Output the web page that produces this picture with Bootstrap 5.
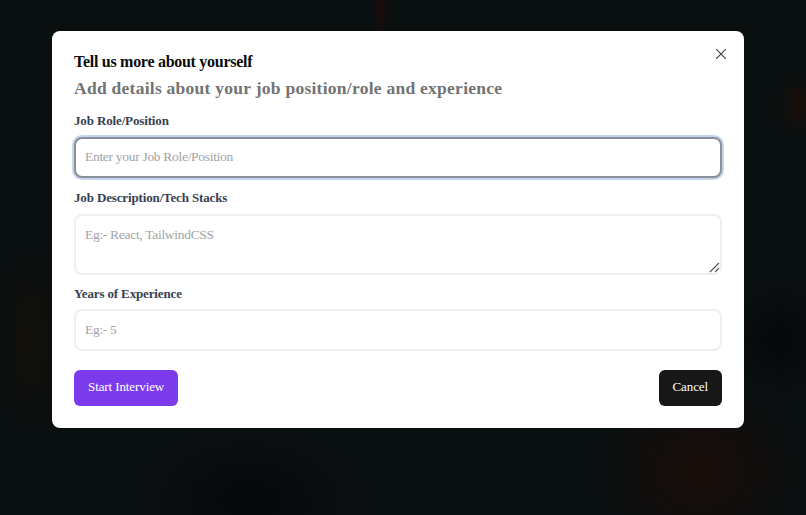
<!DOCTYPE html>
<html lang="en">
<head>
<meta charset="utf-8">
<title>Tell us more about yourself</title>
<link href="https://cdn.jsdelivr.net/npm/bootstrap@5.3.0/dist/css/bootstrap.min.css" rel="stylesheet">
<style>
html,body{height:100%;}
body{
  font-family:"Liberation Serif","Times New Roman",serif;
  background-color:#0a0f10;
  background-image:
    radial-gradient(ellipse 8px 30px at 381px 10px,#1f0c0a 0,rgba(31,12,10,0) 100%),
    radial-gradient(ellipse 22px 30px at 800px 105px,#1a0e08 0,rgba(26,14,8,0) 100%),
    radial-gradient(ellipse 32px 90px at 30px 340px,#130f08 0,rgba(19,15,8,0) 100%),
    radial-gradient(ellipse 100px 90px at 700px 470px,#190c08 0,rgba(25,12,8,0) 100%),
    radial-gradient(ellipse 110px 70px at 250px 500px,#050808 0,rgba(5,8,8,0) 100%),
    radial-gradient(ellipse 60px 60px at 780px 340px,#050808 0,rgba(5,8,8,0) 100%);
  overflow:hidden;
}
.stage{height:515px;padding-top:31px;padding-right:10px;}
.dialog-box{
  position:relative;
  width:692px;height:397px;
  background:#fff;border-radius:8px;
  padding:21px 22px 22px;
}
.dialog-title{font-size:16px;line-height:20px;font-weight:700;letter-spacing:-.28px;color:#0a0a0a;margin:0 0 4px;}
.dialog-sub{font-size:17.5px;line-height:24px;font-weight:700;letter-spacing:.26px;color:#737373;margin:0 0 14px;}
.field-label{font-size:13px;line-height:14px;font-weight:700;letter-spacing:-.14px;color:#374151;margin:0 0 9px;display:block;}
.label-tight{margin-bottom:8px;}
.field{
  display:block;width:100%;
  font-family:inherit;font-size:13.5px;letter-spacing:-.3px;color:#111;
  padding:0 9px;
  background:#fff;
  border:2px solid #efefef;border-radius:8px;
  outline:0;
}
.field::placeholder{color:#9fa3a9;opacity:1;}
.field-input{height:42px;}
.field-area{height:61px;padding-top:9px;line-height:20px;display:block;}
.field-active{
  height:41px;
  padding-bottom:2px;
  border-color:#8a8f9c;
  box-shadow:0 0 0 2px #c5d6ea;
}
.gap-a{margin-bottom:13px;}
.gap-b{margin-bottom:12px;}
.act{
  height:36px;border:0;border-radius:6px;
  font-family:inherit;font-size:13px;letter-spacing:-.1px;line-height:32px;color:#fff;
  padding:0 14px 2px;
}
.act-go,.act-go:hover{background:#7c3aed;color:#fff;}
.act-stop,.act-stop:hover{background:#171717;color:#fff;}
.actions{margin-top:19px;}
.dismiss{
  position:absolute;top:17px;right:17px;width:12px;height:12px;
  padding:0;border:0;background:none;display:block;line-height:0;
}
.grip{position:absolute;right:2px;bottom:2px;pointer-events:none;display:block;background:#fff;}
</style>
</head>
<body>
<main class="stage d-flex justify-content-center align-items-start">
  <section class="dialog-box">
    <button class="dismiss" type="button" aria-label="Close">
      <svg width="12" height="12" viewBox="0 0 12 12" fill="none" stroke="#3a3a3a" stroke-width="1.1"><path d="M1.2 1.2 10.8 10.8M10.8 1.2 1.2 10.8"/></svg>
    </button>
    <h2 class="dialog-title">Tell us more about yourself</h2>
    <p class="dialog-sub">Add details about your job position/role and experience</p>
    <form>
      <div class="gap-a">
        <label class="field-label" for="role">Job Role/Position</label>
        <input class="field field-active" id="role" type="text" placeholder="Enter your Job Role/Position">
      </div>
      <div class="gap-b">
        <label class="field-label" for="desc">Job Description/Tech Stacks</label>
        <div class="position-relative">
          <textarea class="field field-area" id="desc" placeholder="Eg:- React, TailwindCSS"></textarea>
          <svg class="grip" width="11" height="11" viewBox="0 0 11 11" fill="none" stroke="#55585e" stroke-width="1.2"><path d="M1 10 10 1M6 10 10 6"/></svg>
        </div>
      </div>
      <div>
        <label class="field-label label-tight" for="years">Years of Experience</label>
        <input class="field field-input" id="years" type="text" placeholder="Eg:- 5">
      </div>
      <div class="actions d-flex justify-content-between">
        <button class="btn act act-go" type="button">Start Interview</button>
        <button class="btn act act-stop" type="button">Cancel</button>
      </div>
    </form>
  </section>
</main>
<script src="https://cdn.jsdelivr.net/npm/bootstrap@5.3.0/dist/js/bootstrap.bundle.min.js"></script>
</body>
</html>
